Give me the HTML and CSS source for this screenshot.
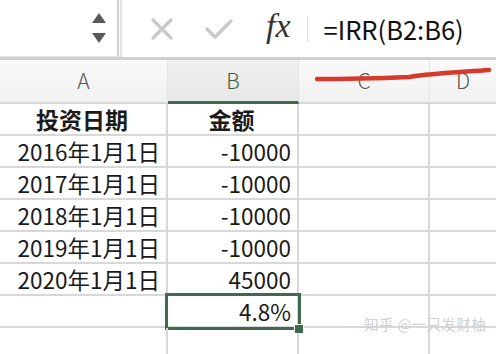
FILE: index.html
```html
<!DOCTYPE html>
<html lang="zh">
<head>
    <meta charset="UTF-8">
    <title>IRR</title>
    <link rel="stylesheet" href="styles.css">
</head>
<body>
    <!-- barre de formule -->
    <div class="formula-bar">
        <div class="name-box">
            <div class="spin">
                <svg width="14" height="10" viewBox="0 0 14 10"><path d="M7 0 L14 10 L0 10 Z" fill="#5a5a5a"/></svg>
                <svg width="14" height="10" viewBox="0 0 14 10"><path d="M0 0 L14 0 L7 10 Z" fill="#5a5a5a"/></svg>
            </div>
        </div>
        <div class="formula-tools">
            <svg class="tool-x" width="22" height="22" viewBox="0 0 22 22"><path d="M2 2 L20 20 M20 2 L2 20" stroke="#c9c9c9" stroke-width="3.2" stroke-linecap="round"/></svg>
            <svg class="tool-ok" width="28" height="22" viewBox="0 0 28 22"><path d="M2 11 L10 19 L26 3" stroke="#c9c9c9" stroke-width="3.2" fill="none" stroke-linecap="round" stroke-linejoin="round"/></svg>
            <span class="fx">fx</span>
            <span class="sep"></span>
            <span class="formula">=IRR(B2:B6)</span>
        </div>
    </div>

    <div class="sheet">
        <div class="col-head">A</div>
        <div class="col-head col-active">B</div>
        <div class="col-head">C</div>
        <div class="col-head col-last">D</div>

        <div class="cell head">投资日期</div>
        <div class="cell head">金额</div>
        <div class="cell"></div>
        <div class="cell col-last"></div>

        <div class="cell num">2016年1月1日</div>
        <div class="cell num">-10000</div>
        <div class="cell"></div>
        <div class="cell col-last"></div>

        <div class="cell num">2017年1月1日</div>
        <div class="cell num">-10000</div>
        <div class="cell"></div>
        <div class="cell col-last"></div>

        <div class="cell num">2018年1月1日</div>
        <div class="cell num">-10000</div>
        <div class="cell"></div>
        <div class="cell col-last"></div>

        <div class="cell num">2019年1月1日</div>
        <div class="cell num">-10000</div>
        <div class="cell"></div>
        <div class="cell col-last"></div>

        <div class="cell num">2020年1月1日</div>
        <div class="cell num">45000</div>
        <div class="cell"></div>
        <div class="cell col-last"></div>

        <div class="cell"></div>
        <div class="cell num selected">4.8%<span class="handle"></span></div>
        <div class="cell"></div>
        <div class="cell col-last"></div>

        <div class="cell"></div>
        <div class="cell"></div>
        <div class="cell"></div>
        <div class="cell col-last"></div>
    </div>

    <!-- trait rouge dessiné à la main -->
    <svg class="scribble" width="180" height="20" viewBox="0 0 180 20">
        <path d="M3 15 C40 15 70 14 95 13 C120 9 150 8 175 6" stroke="#d63a2a" stroke-width="4.5" fill="none" stroke-linecap="round"/>
    </svg>

    <div class="watermark">知乎 @一只发财柚</div>
</body>
</html>
```

FILE: styles.css
```css
body {
    margin: 0;
    width: 496px;
    height: 354px;
    overflow: hidden;
    position: relative;
    background: #fff;
    font-family: "Noto Sans CJK SC", "Noto Sans", sans-serif;
    color: #1a1a1a;
}

.formula-bar {
    display: flex;
    height: 57px;
    border-bottom: 3px solid #cfcfcf;
}

.name-box {
    width: 119px;
    border-right: 2px solid #d0d0d0;
    border-bottom: 1px solid #e2e2e2;
    display: flex;
    justify-content: flex-end;
    align-items: center;
    padding-right: 11px;
    box-sizing: border-box;
}

.spin {
    display: flex;
    flex-direction: column;
    gap: 10px;
}

.formula-tools {
    flex: 1;
    display: flex;
    align-items: center;
    border-left: 2px solid #e4e4e4;
    margin-left: 1px;
}

.tool-x {
    margin-left: 29px;
}

.tool-ok {
    margin-left: 32px;
}

.fx {
    margin-left: 33px;
    font-family: "Liberation Serif", serif;
    font-style: italic;
    font-size: 34px;
    color: #333;
    line-height: 1;
    margin-top: -5px;
}

.sep {
    width: 1px;
    height: 26px;
    background: #e0e0e0;
    margin-left: 16px;
}

.formula {
    margin-left: 16px;
    font-size: 25.5px;
    color: #111;
    margin-top: -1px;
}

.sheet {
    display: grid;
    grid-template-columns: 168px 131px 131px 1fr;
    grid-template-rows: 44px repeat(8, 32px);
}

.col-head {
    background: linear-gradient(#fafafa, #f1f1f1);
    border-right: 1px solid #e4e4e4;
    border-bottom: 2px solid #d6d6d6;
    display: flex;
    align-items: center;
    justify-content: center;
    font-size: 21px;
    font-weight: 300;
    color: #555;
    padding-bottom: 2px;
}

.col-active {
    background: linear-gradient(#f0f0f0, #e8e8e8);
    color: #3a5e45;
    border-bottom: 3px solid #3f6a4b;
}

.cell {
    border-right: 2px solid #d8d8d8;
    border-bottom: 2px solid #d8d8d8;
    display: flex;
    align-items: center;
    padding: 0 6px 0 4px;
    font-size: 22.5px;
    position: relative;
}

.col-last {
    border-right: none;
}

.head {
    justify-content: center;
    font-weight: bold;
    font-size: 23px;
}

.num {
    justify-content: flex-end;
}

.selected::after {
    content: "";
    position: absolute;
    top: -3px;
    left: -3px;
    right: -4px;
    bottom: -4px;
    border: 3px solid #3f6a4b;
}

.handle {
    position: absolute;
    right: -7px;
    bottom: -8px;
    width: 8px;
    height: 8px;
    background: #3f6a4b;
    border: 1px solid #fff;
    z-index: 1;
}

.scribble {
    position: absolute;
    left: 314px;
    top: 64px;
}

.watermark {
    position: absolute;
    left: 364px;
    top: 313px;
    font-size: 14.5px;
    color: #d0d0d0;
    letter-spacing: 0.4px;
}
```
